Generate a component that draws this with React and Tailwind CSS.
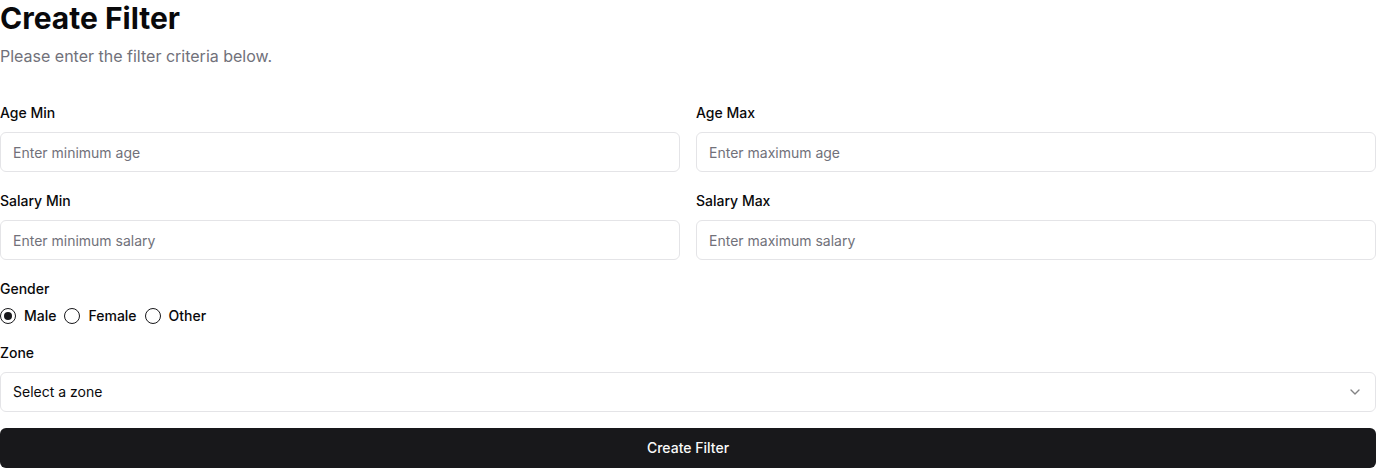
import React, { useState } from "react";
import { ChevronDown } from "lucide-react";

function Field({ label, placeholder }) {
  return (
    <div className="flex flex-col">
      <label className="text-sm font-medium leading-5 text-[#09090b]">{label}</label>
      <input
        placeholder={placeholder}
        className="mt-[9px] h-10 w-full rounded-md border border-[#e4e4e7] bg-white px-3 text-sm text-[#09090b] placeholder:text-[#71717a] outline-none"
      />
    </div>
  );
}

function Radio({ checked, label, onClick }) {
  return (
    <button type="button" onClick={onClick} className="flex items-center gap-2">
      <span className="flex h-4 w-4 items-center justify-center rounded-full border border-[#18181b]">
        {checked && <span className="h-2 w-2 rounded-full bg-[#18181b]" />}
      </span>
      <span className="text-sm font-medium leading-5 text-[#09090b]">{label}</span>
    </button>
  );
}

export default function App() {
  const [gender, setGender] = useState("Male");
  return (
    <div className="w-[1376px] bg-white" style={{ fontFamily: "Inter, 'Noto Sans', sans-serif" }}>
      <h1 className="text-3xl font-bold leading-9 text-[#09090b]">Create Filter</h1>
      <p className="mt-2 text-base leading-6 text-[#71717a]">Please enter the filter criteria below.</p>
      <form className="mt-[35px] flex flex-col" onSubmit={(e) => e.preventDefault()}>
        <div className="grid grid-cols-2 gap-x-4 gap-y-[19px]">
          <Field label="Age Min" placeholder="Enter minimum age" />
          <Field label="Age Max" placeholder="Enter maximum age" />
          <Field label="Salary Min" placeholder="Enter minimum salary" />
          <Field label="Salary Max" placeholder="Enter maximum salary" />
        </div>
        <div className="mt-[19px] flex flex-col">
          <span className="text-sm font-medium leading-5 text-[#09090b]">Gender</span>
          <div className="mt-[7px] flex items-center gap-2">
            {["Male", "Female", "Other"].map((g) => (
              <Radio key={g} label={g} checked={gender === g} onClick={() => setGender(g)} />
            ))}
          </div>
        </div>
        <div className="mt-[17px] flex flex-col">
          <span className="text-sm font-medium leading-5 text-[#09090b]">Zone</span>
          <button
            type="button"
            className="mt-[9px] flex h-10 w-full items-center justify-between rounded-md border border-[#e4e4e7] bg-white px-3 text-sm text-[#09090b]"
          >
            <span>Select a zone</span>
            <ChevronDown className="h-4 w-4 opacity-50" />
          </button>
        </div>
        <button
          type="submit"
          className="mt-4 h-10 w-full rounded-md bg-[#18181b] text-sm font-medium text-[#fafafa]"
        >
          Create Filter
        </button>
      </form>
    </div>
  );
}
